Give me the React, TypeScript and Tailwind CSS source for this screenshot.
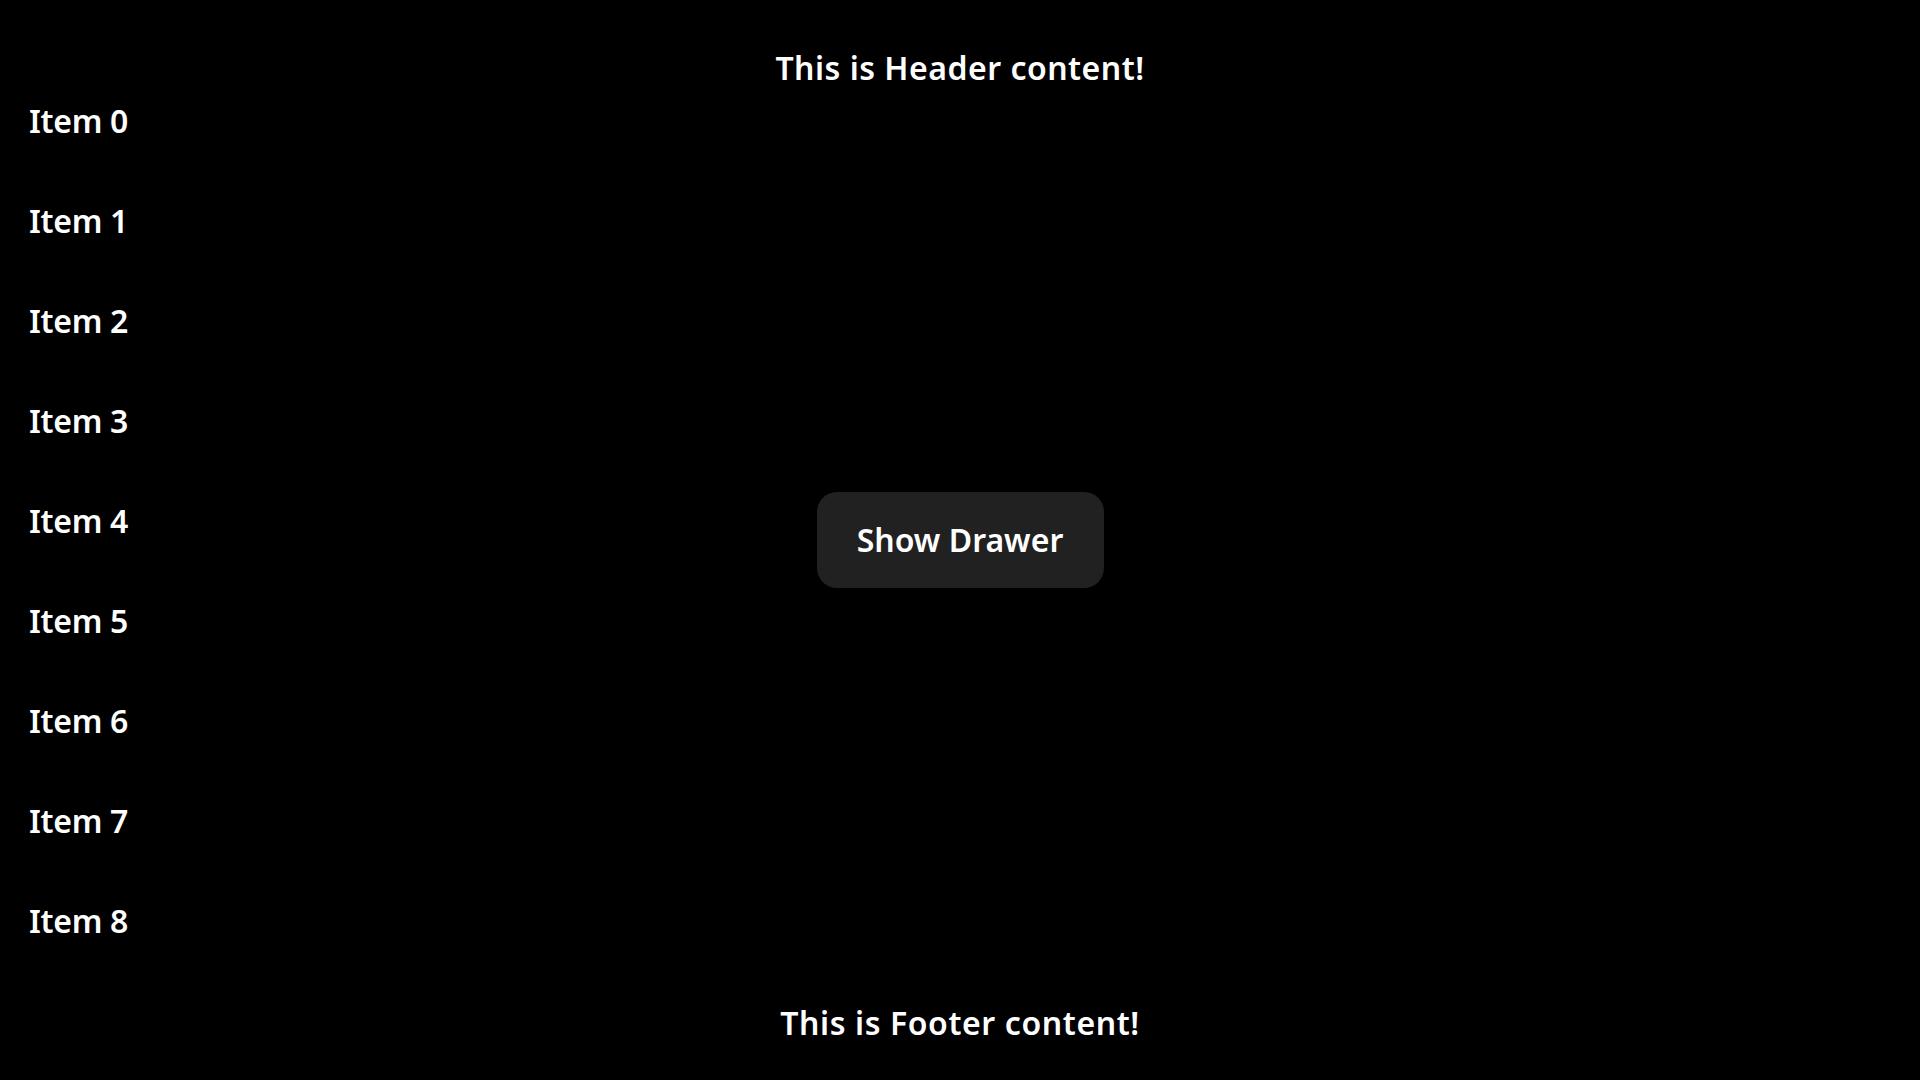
export default function App() {
  const items = Array.from({ length: 9 }, (_, i) => `Item ${i}`);

  return (
    <div
      className="grid h-screen w-full bg-black text-white overflow-hidden"
      style={{ fontFamily: '"Noto Sans", "Open Sans", sans-serif' }}
    >
      {/* page column: header, list, footer */}
      <div className="col-start-1 row-start-1 flex flex-col">
        <header className="pt-[46px] text-center text-[32px] leading-[44px] font-semibold tracking-[0.5px]">
          This is Header content!
        </header>

        <main className="flex-1 pl-[29px] pt-[9px]">
          <ul className="flex flex-col gap-[56px]">
            {items.map((item) => (
              <li key={item} className="text-[32px] leading-[44px] font-semibold tracking-[-0.3px]">
                {item}
              </li>
            ))}
          </ul>
        </main>

        <footer className="pb-[35px] text-center text-[32px] leading-[44px] font-semibold tracking-[0.6px]">
          This is Footer content!
        </footer>
      </div>

      {/* drawer trigger, centered over the page */}
      <div className="col-start-1 row-start-1 flex items-center justify-center pointer-events-none">
        <button className="pointer-events-auto w-[287px] h-[96px] rounded-[20px] bg-[#212121] text-[32px] font-semibold text-white">
          Show Drawer
        </button>
      </div>
    </div>
  );
}
